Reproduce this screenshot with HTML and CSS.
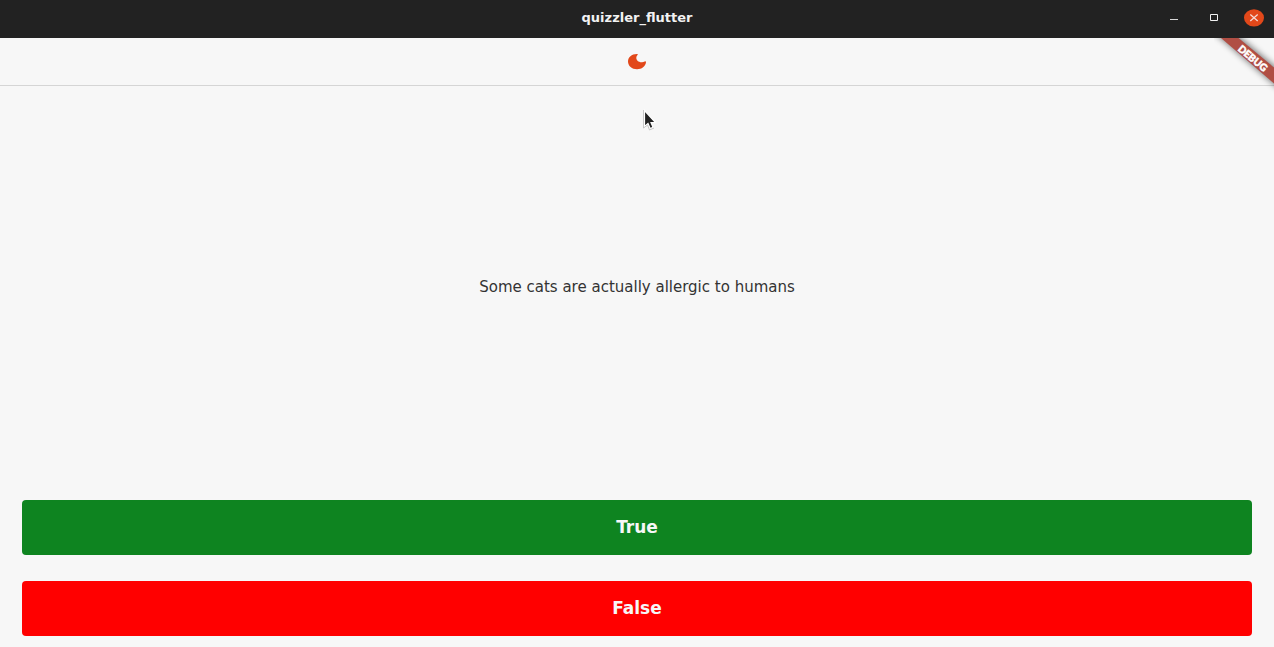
FILE: index.html
```html
<!DOCTYPE html>
<html lang="en">
<head>
<meta charset="utf-8">
<meta name="viewport" content="width=device-width, initial-scale=1">
<title>quizzler_flutter</title>
<link rel="stylesheet" href="styles.css">
</head>
<body>
<div class="window">
  <header class="titlebar">
    <h1 class="title">quizzler_flutter</h1>
    <div class="controls">
      <button class="control" type="button" aria-label="Minimize">
        <svg width="20" height="18" viewBox="0 0 20 18"><path d="M6 10.5h8" stroke="#d8d8d8" fill="none"/></svg>
      </button>
      <button class="control" type="button" aria-label="Maximize">
        <svg width="20" height="18" viewBox="0 0 20 18"><path d="M6.5 5.5h7v6h-7z" stroke="#f2f2f2" fill="none"/></svg>
      </button>
      <button class="control" type="button" aria-label="Close">
        <svg width="20" height="18" viewBox="0 0 20 18"><ellipse cx="10" cy="8.8" rx="10" ry="8.6" fill="#e2481a"/><path d="M6.3 5.6l7.4 6.4M13.7 5.6L6.3 12" stroke="#f5dcd8" stroke-width="1.3" fill="none"/></svg>
      </button>
    </div>
  </header>
  <div class="app">
    <nav class="navbar">
      <button class="theme" type="button" aria-label="Switch theme">
        <svg width="20" height="18" viewBox="0 0 20 18"><path d="M10.3 1C4.800 .8 1 4.300 1 8.500C1 13 5 16.200 10 16.200C14.700 16.200 18.500 13.400 19 9.200C19 8.300 18.400 8.100 17.700 8.500C16.500 9.100 15.600 9.300 14.500 9.200C11.500 9.100 9.300 7.200 9.300 4.700C9.300 3.700 9.800 2.900 10.500 2.100C11 1.500 10.900 1.100 10.300 1Z" fill="#e2481a"/></svg>
      </button>
    </nav>
    <svg class="ribbon" width="60" height="60" viewBox="0 0 60 60">
      <defs><filter id="shade" x="-30%" y="-30%" width="160%" height="160%"><feGaussianBlur stdDeviation="3"/></filter></defs>
      <path d="M-4 -9L16 -9L70 36V55Z" fill="#000" opacity=".5" filter="url(#shade)"/>
      <path d="M7 0H24.500L60 29.500V45.500Z" fill="#b04e44"/>
      <text class="ribbon-text" x="39" y="20" transform="rotate(40 39 20)" text-anchor="middle" dominant-baseline="central">DEBUG</text>
    </svg>
    <main class="quiz">
      <p class="question">Some cats are actually allergic to humans</p>
      <button class="answer answer-true" type="button">True</button>
      <button class="answer answer-false" type="button">False</button>
    </main>
    <svg class="pointer" width="14" height="22" viewBox="0 0 14 22" aria-hidden="true"><path d="M1.500 1.500V17.500L5 14.500L7.200 19.500L10 18.300L8 13.500H12.500Z" fill="#222" stroke="#fff" stroke-width="1.200"/><path d="M.5 1V19L4.500 16L6.500 21L11 19" stroke="#bbb" stroke-width=".8" fill="none"/></svg>
  </div>
</div>
</body>
</html>
```
FILE: styles.css
```css
* {
  box-sizing: border-box;
}

body {
  margin: 0;
  background: #f7f7f7;
  color: #333;
  font-family: "DejaVu Sans", "Noto Sans", sans-serif;
}

button {
  border: 0;
  padding: 0;
  background: none;
  font: inherit;
}

svg {
  display: block;
}

.window {
  display: flex;
  flex-direction: column;
  min-height: 100vh;
}

.titlebar {
  display: grid;
  grid-template-columns: 1fr auto 1fr;
  align-items: center;
  height: 38px;
  padding: 0 10px 3px;
  background: #222;
}

.title {
  grid-column: 2;
  margin: 0;
  color: #f2f2f2;
  font-size: 13px;
  line-height: 20px;
  font-weight: 700;
}

.controls {
  display: flex;
  justify-content: flex-end;
  gap: 20px;
}

.app {
  position: relative;
  display: flex;
  flex: 1;
  flex-direction: column;
}

.navbar {
  display: flex;
  align-items: center;
  justify-content: center;
  height: 48px;
  border-bottom: 1px solid #d5d5d5;
}

.ribbon {
  position: absolute;
  top: 0;
  right: 0;
}

.ribbon-text {
  fill: #fff;
  stroke: #fff;
  stroke-width: 0.5px;
  font-size: 10px;
  font-weight: 900;
  font-family: Lato, sans-serif;
}

.quiz {
  display: flex;
  flex: 1;
  flex-direction: column;
  padding: 0 22px 11px;
}

.question {
  display: flex;
  flex: 1;
  align-items: center;
  justify-content: center;
  margin: 0;
  padding-bottom: 12px;
  font-size: 15px;
  line-height: 24px;
}

.answer {
  border-radius: 4px;
  padding: 13px;
  color: #f7f7f7;
  font-size: 17px;
  line-height: 29px;
  font-weight: 700;
}

.answer-true {
  margin-bottom: 26px;
  background: #0e8420;
}

.answer-false {
  background: #f00;
}

.pointer {
  position: absolute;
  top: 71px;
  left: calc(50% + 6px);
}
```
